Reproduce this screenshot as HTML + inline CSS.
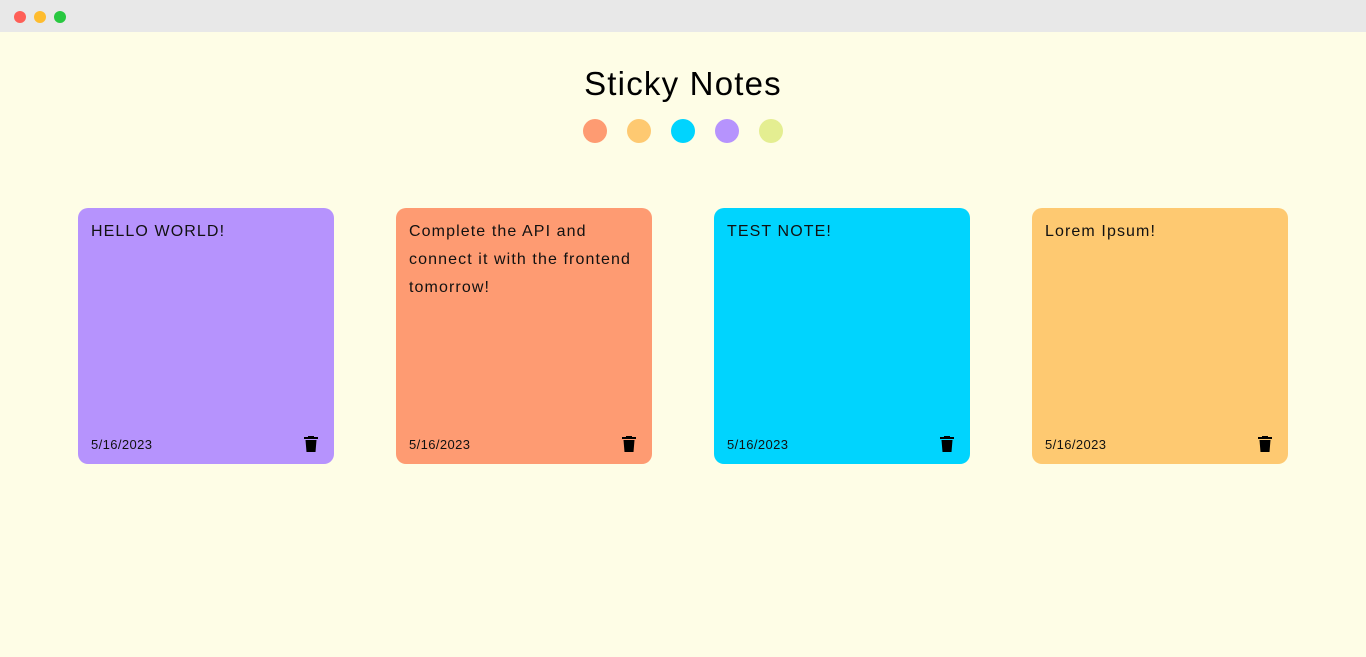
<!DOCTYPE html>
<html><head><meta charset="utf-8"><style>
*{margin:0;padding:0;box-sizing:border-box}
body{width:1366px;height:657px;background:#fefde6;font-family:"Liberation Sans",sans-serif;overflow:hidden;position:relative}
.bar{height:32px;background:#e8e8e8;position:relative}
.dot{position:absolute;top:11px;width:12px;height:12px;border-radius:50%}
h1{position:absolute;top:65px;left:0;width:1366px;text-align:center;font-weight:400;font-size:33px;letter-spacing:1.2px;color:#000}
.c{position:absolute;top:119px;width:24px;height:24px;border-radius:50%}
.n{position:absolute;top:208px;width:256px;height:256px;border-radius:10px}
.t{position:absolute;left:13px;top:10px;right:0;font-size:16px;line-height:28px;letter-spacing:1.1px;color:#111;white-space:nowrap}
.d{position:absolute;top:437px;font-size:13px;letter-spacing:0.4px;color:#111}
.tr{position:absolute;top:436px}
</style></head><body>
<div class="bar">
<div class="dot" style="left:14px;background:#fe5f57"></div>
<div class="dot" style="left:34px;background:#febc2e"></div>
<div class="dot" style="left:54px;background:#28c840"></div>
</div>
<h1>Sticky Notes</h1>
<div class="c" style="left:583px;background:#fe9b72"></div>
<div class="c" style="left:627px;background:#fec971"></div>
<div class="c" style="left:671px;background:#00d4fe"></div>
<div class="c" style="left:715px;background:#b693fd"></div>
<div class="c" style="left:759px;background:#e4ee91"></div>

<div class="n" style="left:78px;background:#b693fd"><div class="t">HELLO WORLD!</div></div>
<div class="n" style="left:396px;background:#fe9b72"><div class="t">Complete the API and<br>connect it with the frontend<br>tomorrow!</div></div>
<div class="n" style="left:714px;background:#00d4fe"><div class="t">TEST NOTE!</div></div>
<div class="n" style="left:1032px;background:#fec971"><div class="t">Lorem Ipsum!</div></div>

<div class="d" style="left:91px">5/16/2023</div>
<div class="d" style="left:409px">5/16/2023</div>
<div class="d" style="left:727px">5/16/2023</div>
<div class="d" style="left:1045px">5/16/2023</div>

<svg class="tr" style="left:304px" width="14" height="16" viewBox="0 0 14 16"><rect x="0" y="1" width="14" height="2" fill="#000"/><rect x="4" y="0" width="6" height="2" fill="#000"/><path d="M1.5 4H12.5L11.5 16H2.5Z" fill="#000"/></svg>
<svg class="tr" style="left:622px" width="14" height="16" viewBox="0 0 14 16"><rect x="0" y="1" width="14" height="2" fill="#000"/><rect x="4" y="0" width="6" height="2" fill="#000"/><path d="M1.5 4H12.5L11.5 16H2.5Z" fill="#000"/></svg>
<svg class="tr" style="left:940px" width="14" height="16" viewBox="0 0 14 16"><rect x="0" y="1" width="14" height="2" fill="#000"/><rect x="4" y="0" width="6" height="2" fill="#000"/><path d="M1.5 4H12.5L11.5 16H2.5Z" fill="#000"/></svg>
<svg class="tr" style="left:1258px" width="14" height="16" viewBox="0 0 14 16"><rect x="0" y="1" width="14" height="2" fill="#000"/><rect x="4" y="0" width="6" height="2" fill="#000"/><path d="M1.5 4H12.5L11.5 16H2.5Z" fill="#000"/></svg>
</body></html>
